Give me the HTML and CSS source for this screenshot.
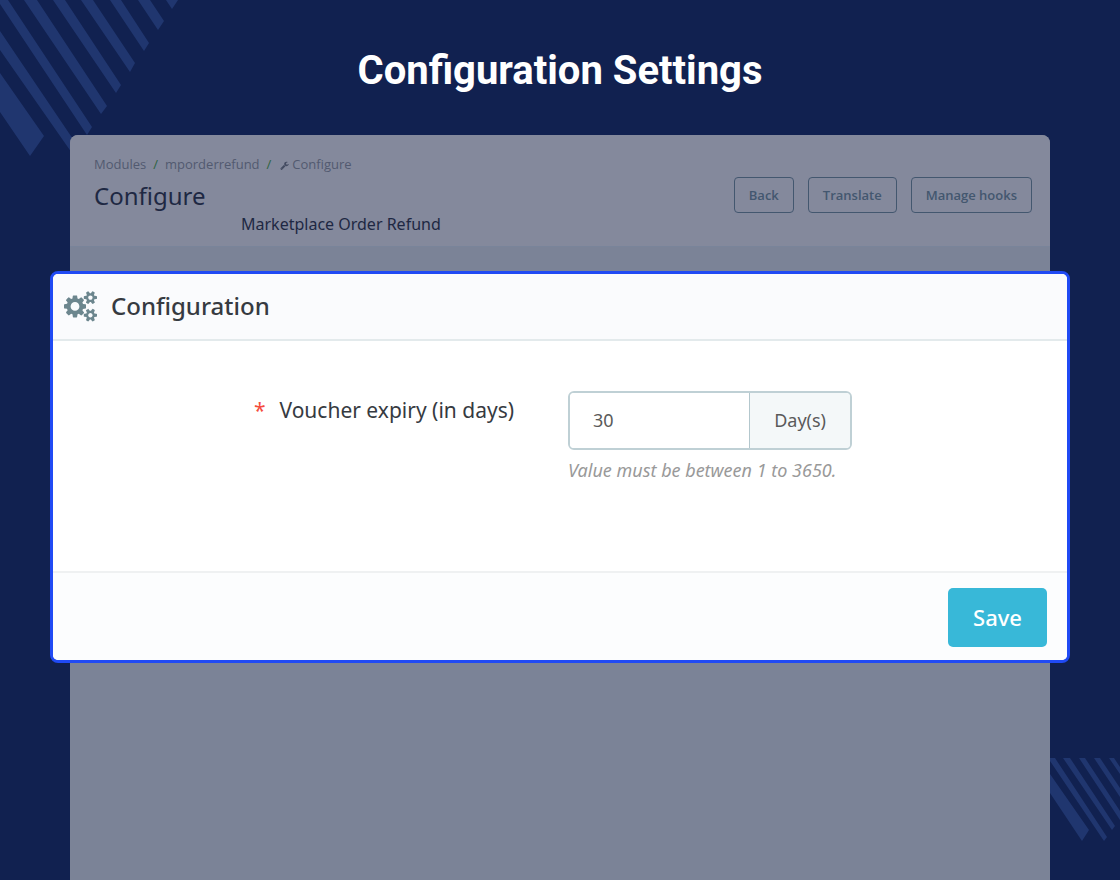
FILE: index.html
```html
<!DOCTYPE html>
<html lang="en">
<head>
<meta charset="utf-8">
<title>Configuration Settings</title>
<link rel="stylesheet" href="styles.css">
</head>
<body>
<svg class="stripes stripes-top" viewBox="0 0 178 156" aria-hidden="true">
  <path d="M0 73L44 136L30 156L0 112ZM0 31L79 148L74 156L0 50ZM0 0H8L92 127L87 135L0 4ZM24 0H37L107 106L101 114ZM53 0H65L121 85L116 93ZM81 0H93L135 63L130 72ZM110 0H121L149 43L144 51ZM138 0H150L164 21L158 30ZM166 0H178L172 9Z"/>
</svg>
<svg class="stripes stripes-bottom" viewBox="0 0 70 83" aria-hidden="true">
  <path d="M0 16L39 72L32 83L0 35ZM0 0H5L57 79L54 83L0 3ZM13 0H20L65 68L62 72ZM29 0H35L70 53V62ZM44 0H50L70 30V39ZM59 0H64L70 9V16Z"/>
</svg>
<main class="page">
  <h1 class="page-title">Configuration Settings</h1>
  <div class="backdrop">
    <header class="module-header">
      <div class="module-info">
        <nav class="breadcrumb" aria-label="Breadcrumb">
          <a href="#">Modules</a>
          <span class="slash">/</span>
          <a href="#">mporderrefund</a>
          <span class="slash">/</span>
          <a class="current" href="#">
            <svg class="wrench" viewBox="0 0 1792 1792" aria-hidden="true"><path d="M448 1472q0-26-19-45t-45-19-45 19-19 45 19 45 45 19 45-19 19-45zm644-420l-682 682q-37 37-90 37-52 0-91-37l-106-108q-38-36-38-90 0-53 38-91l681-681q39 98 114.500 173.500t173.500 114.500zm634-435q0 39-23 106-47 134-164.500 217.500t-258.500 83.500q-185 0-316.500-131.500t-131.500-316.500 131.500-316.500 316.500-131.500q58 0 121.500 16.500t107.500 46.500q16 11 16 28t-16 28l-293 169v224l193 107q5-3 79-48.500t135.500-81 70.500-35.500q15 0 23.500 10t8.500 25z"/></svg>
            Configure
          </a>
        </nav>
        <h2 class="module-title">Configure</h2>
        <p class="module-name">Marketplace Order Refund</p>
      </div>
      <div class="actions">
        <button class="outline-button" type="button">Back</button>
        <button class="outline-button" type="button">Translate</button>
        <button class="outline-button" type="button">Manage hooks</button>
      </div>
    </header>
    <form class="panel">
      <div class="panel-header">
        <svg class="cogs" viewBox="0 0 1920 1792" aria-hidden="true"><path d="M896 896q0-106-75-181t-181-75-181 75-75 181 75 181 181 75 181-75 75-181zm768 512q0-52-38-90t-90-38-90 38-38 90q0 53 37.500 90.500t90.500 37.500 90.500-37.500 37.500-90.500zm0-1024q0-52-38-90t-90-38-90 38-38 90q0 53 37.500 90.500t90.500 37.500 90.500-37.500 37.500-90.500zm-384 421v185q0 10-7 19.500t-16 10.500l-155 24q-11 35-32 76 34 48 90 115 7 11 7 20 0 12-7 19-23 30-82.500 89.500t-78.500 59.500q-11 0-21-7l-115-90q-37 19-77 31-11 108-23 155-7 24-30 24h-186q-11 0-20-7.500t-10-17.500l-23-153q-34-10-75-31l-118 89q-7 7-20 7-11 0-21-8-144-133-144-160 0-9 7-19 10-14 41-53t47-61q-23-44-35-82l-152-24q-10-1-17-9.500t-7-19.500v-185q0-10 7-19.500t16-10.500l155-24q11-35 32-76-34-48-90-115-7-11-7-20 0-12 7-20 22-30 82-89t79-59q11 0 21 7l115 90q34-18 77-32 11-108 23-154 7-24 30-24h186q11 0 20 7.500t10 17.500l23 153q34 10 75 31l118-89q8-7 20-7 11 0 21 8 144 133 144 160 0 8-7 19-12 16-42 54t-45 60q23 48 34 82l152 23q10 2 17 10.500t7 19.500zm640 533v140q0 16-149 31-12 27-30 52 51 113 51 138 0 4-4 7-122 71-124 71-8 0-46-47t-52-68q-20 2-30 2t-30-2q-14 21-52 68t-46 47q-2 0-124-71-4-3-4-7 0-25 51-138-18-25-30-52-149-15-149-31v-140q0-16 149-31 13-29 30-52-51-113-51-138 0-4 4-7 4-2 35-20t59-34 30-16q8 0 46 46.500t52 67.500q20-2 30-2t30 2q51-71 92-112l6-2q4 0 124 70 4 3 4 7 0 25-51 138 17 23 30 52 149 15 149 31zm0-1024v140q0 16-149 31-12 27-30 52 51 113 51 138 0 4-4 7-122 71-124 71-8 0-46-47t-52-68q-20 2-30 2t-30-2q-14 21-52 68t-46 47q-2 0-124-71-4-3-4-7 0-25 51-138-18-25-30-52-149-15-149-31v-140q0-16 149-31 13-29 30-52-51-113-51-138 0-4 4-7 4-2 35-20t59-34 30-16q8 0 46 46.500t52 67.500q20-2 30-2t30 2q51-71 92-112l6-2q4 0 124 70 4 3 4 7 0 25-51 138 17 23 30 52 149 15 149 31z"/></svg>
        <h3 class="panel-title">Configuration</h3>
      </div>
      <div class="panel-body">
        <label class="field-label" for="expiry"><span class="required">*</span>Voucher expiry (in days)</label>
        <div class="field">
          <div class="input-group">
            <input class="input" id="expiry" type="text" value="30" aria-describedby="expiry-help">
            <span class="addon">Day(s)</span>
          </div>
          <p class="help" id="expiry-help">Value must be between 1 to 3650.</p>
        </div>
      </div>
      <div class="panel-footer">
        <button class="save-button" type="submit">Save</button>
      </div>
    </form>
  </div>
</main>
</body>
</html>
```
FILE: styles.css
```css
* {
  box-sizing: border-box;
}

body {
  margin: 0;
  background: #112150;
  font-family: "Noto Sans", "Open Sans", sans-serif;
  overflow-x: hidden;
}

h1, h2, h3, p {
  margin: 0;
}

.stripes {
  position: absolute;
  fill: #20366f;
}

.stripes-top {
  top: 0;
  left: 0;
  width: 178px;
}

.stripes-bottom {
  right: 0;
  bottom: 39px;
  width: 70px;
}

.page {
  position: relative;
  display: flex;
  flex-direction: column;
  min-height: 100vh;
  padding: 0 70px;
}

.page-title {
  padding: 47px 0 40px;
  color: #fff;
  font: 700 40px/48px Roboto, sans-serif;
  text-align: center;
}

.backdrop {
  position: relative;
  flex: 1;
  border-radius: 8px 8px 0 0;
  background: #7b8397;
}

.module-header {
  display: flex;
  justify-content: space-between;
  padding: 20px 18px 10px 24px;
  border-bottom: 1px solid #79849a;
  border-radius: 8px 8px 0 0;
  background: #84899c;
}

.breadcrumb {
  display: flex;
  gap: 7px;
  color: #525a70;
  font: 13px/18px "Open Sans", sans-serif;
}

.breadcrumb a {
  color: inherit;
  text-decoration: none;
}

.breadcrumb .current {
  display: flex;
  align-items: center;
  gap: 3px;
  padding-left: 2px;
}

.slash {
  color: #2d6340;
}

.wrench {
  width: 9px;
  margin-top: 3px;
  fill: #434b61;
}

.module-title {
  color: #1e2843;
  font: 400 24px/46px "Noto Sans", sans-serif;
}

.module-name {
  padding-left: 147px;
  margin-top: -7px;
  color: #1e2843;
  font: 16px/24px "Noto Sans", sans-serif;
}

.actions {
  display: flex;
  align-items: flex-start;
  gap: 14px;
  padding-top: 22px;
}

.outline-button {
  height: 36px;
  padding: 0 14px;
  border: 1px solid #43576f;
  border-radius: 4px;
  background: transparent;
  color: #43576f;
  font: 600 13px/18px "Open Sans", sans-serif;
}

.panel {
  position: absolute;
  top: 136px;
  left: -20px;
  right: -20px;
  overflow: hidden;
  border: 3px solid #204af4;
  border-radius: 8px;
  background: #fff;
}

.panel-header {
  display: flex;
  align-items: center;
  gap: 14px;
  padding: 16px 11px;
  border-bottom: 2px solid #e3eaec;
  background: #fafbfd;
}

.cogs {
  width: 33px;
  fill: #6c868e;
}

.panel-title {
  padding-bottom: 2px;
  color: #363a41;
  font-size: 24px;
  font-weight: 500;
  line-height: 31px;
}

.panel-body {
  display: grid;
  grid-template-columns: 461px 1fr;
  gap: 54px;
  padding: 50px 0 87px;
}

.field-label {
  color: #363a41;
  font-size: 21px;
  line-height: 38px;
  text-align: right;
}

.required {
  margin-right: 14px;
  color: #f54c3e;
}

.input-group {
  display: flex;
  width: 284px;
  border: 2px solid #bfd0d5;
  border-radius: 6px;
  overflow: hidden;
}

.input {
  flex: 1;
  min-width: 0;
  height: 55px;
  padding: 0 23px 2px;
  border: 0;
  background: #fff;
  color: #5a5a5a;
  font: 18px/24px "Noto Sans", sans-serif;
}

.addon {
  padding: 0 24px;
  border-left: 1px solid #b3c7cd;
  background: #f4f8f9;
  color: #5a5a5a;
  font-size: 18px;
  line-height: 55px;
}

.help {
  margin-top: 7px;
  color: #999;
  font-size: 18px;
  font-style: italic;
  line-height: 27px;
}

.panel-footer {
  display: flex;
  justify-content: flex-end;
  padding: 15px 20px 13px;
  border-top: 2px solid #eff1f2;
  background: #fcfdfe;
}

.save-button {
  height: 59px;
  padding: 0 25px 2px;
  border: 0;
  border-radius: 5px;
  background: #38b8d8;
  color: #fff;
  font: 500 22px/30px "Noto Sans", sans-serif;
}
```
